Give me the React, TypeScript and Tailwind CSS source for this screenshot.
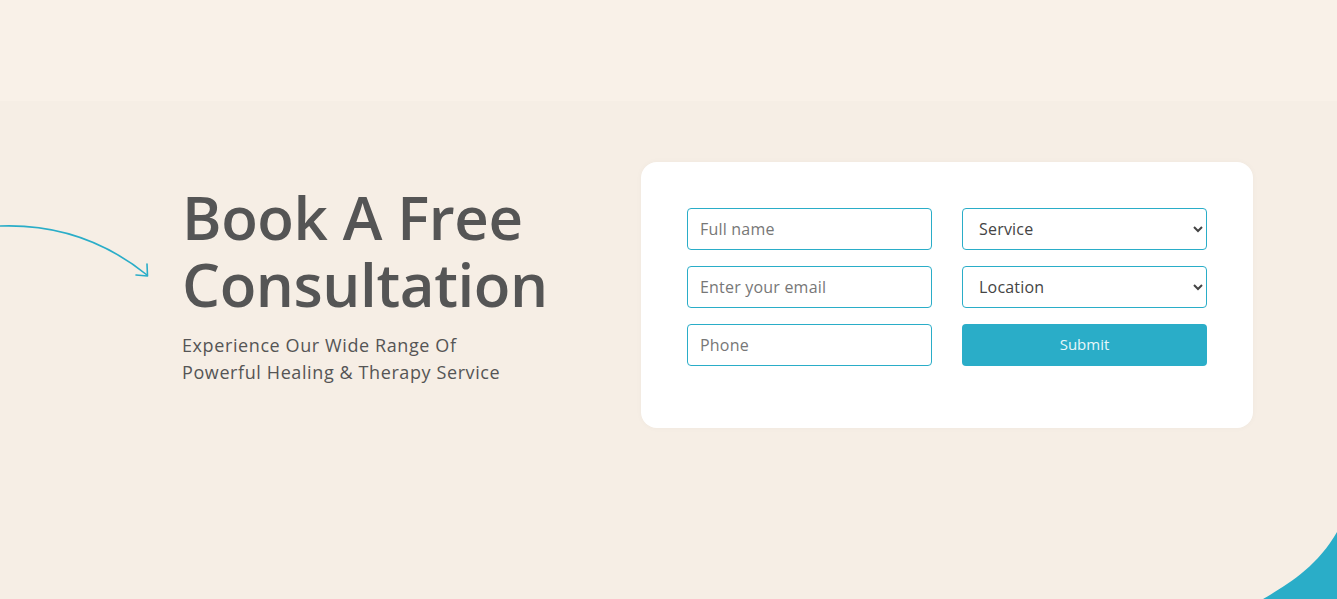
import { useState } from 'react'

const font = { fontFamily: '"Open Sans", "Noto Sans", sans-serif' }

function CurvedArrow() {
  return (
    <svg
      className="absolute left-0 top-[120px]"
      width="152"
      height="60"
      viewBox="0 0 152 60"
      fill="none"
    >
      <path d="M0 5 C 55 3, 105 20, 147 54" stroke="#2aadc8" strokeWidth="1.6" strokeLinecap="round" />
      <path d="M136 54 L147.5 55 L147 43" stroke="#2aadc8" strokeWidth="1.6" strokeLinecap="round" strokeLinejoin="round" />
    </svg>
  )
}

function CornerBlob() {
  return (
    <svg className="absolute right-0 bottom-0" width="80" height="70" viewBox="0 0 80 70">
      <path d="M6 70 C 30 56, 60 38, 80 3 L80 70 Z" fill="#2aadc8" />
    </svg>
  )
}

export default function App() {
  const [form, setForm] = useState({ name: '', email: '', phone: '', service: '', location: '' })

  const inputCls =
    'h-[42px] w-full rounded-[4px] border border-[#2aadc8] bg-white px-3 text-[16px] tracking-[0.2px] text-[#444] outline-none placeholder:text-[#777]'
  const selectCls =
    'h-[42px] w-full rounded-[4px] border border-[#2aadc8] bg-white pl-3 pr-2 text-[16px] tracking-[0.2px] text-[#444] outline-none'

  return (
    <div className="min-h-[599px] w-full bg-[#f6eee5]" style={font}>
      <div className="h-[101px] bg-[#f9f1e8]" />
      <section className="relative h-[498px] overflow-hidden">
        <CurvedArrow />
        <CornerBlob />
        <div className="flex items-start pl-[182px] pt-[61px]">
          <div className="w-[459px] pt-[22px]">
            <h1 className="text-[60px] font-semibold leading-[67px] tracking-[-0.4px] text-[#555555]">
              <span className="block">Book A Free</span>
              <span className="block">Consultation</span>
            </h1>
            <p className="mt-[14px] text-[18px] font-medium leading-[27px] tracking-[0.6px] text-[#555555]">
              Experience Our Wide Range Of
              <br />
              Powerful Healing &amp; Therapy Service
            </p>
          </div>
          <div className="w-[612px] rounded-[16px] bg-white px-[46px] pt-[46px] pb-[62px] shadow-[0_0_6px_rgba(0,0,0,0.03)]">
            <form className="grid grid-cols-2 gap-x-[30px] gap-y-[16px]" onSubmit={(e) => e.preventDefault()}>
              <input
                className={inputCls}
                placeholder="Full name"
                value={form.name}
                onChange={(e) => setForm({ ...form, name: e.target.value })}
              />
              <select
                className={selectCls}
                value={form.service}
                onChange={(e) => setForm({ ...form, service: e.target.value })}
              >
                <option value="">Service</option>
                <option value="massage">Massage</option>
                <option value="therapy">Therapy</option>
              </select>
              <input
                className={inputCls}
                placeholder="Enter your email"
                value={form.email}
                onChange={(e) => setForm({ ...form, email: e.target.value })}
              />
              <select
                className={selectCls}
                value={form.location}
                onChange={(e) => setForm({ ...form, location: e.target.value })}
              >
                <option value="">Location</option>
                <option value="a">Downtown</option>
              </select>
              <input
                className={inputCls}
                placeholder="Phone"
                value={form.phone}
                onChange={(e) => setForm({ ...form, phone: e.target.value })}
              />
              <button
                type="submit"
                className="h-[42px] w-full rounded-[4px] bg-[#2aadc8] pb-[2px] text-[15px] text-[#e8f7fa]"
              >
                Submit
              </button>
            </form>
          </div>
        </div>
      </section>
    </div>
  )
}
